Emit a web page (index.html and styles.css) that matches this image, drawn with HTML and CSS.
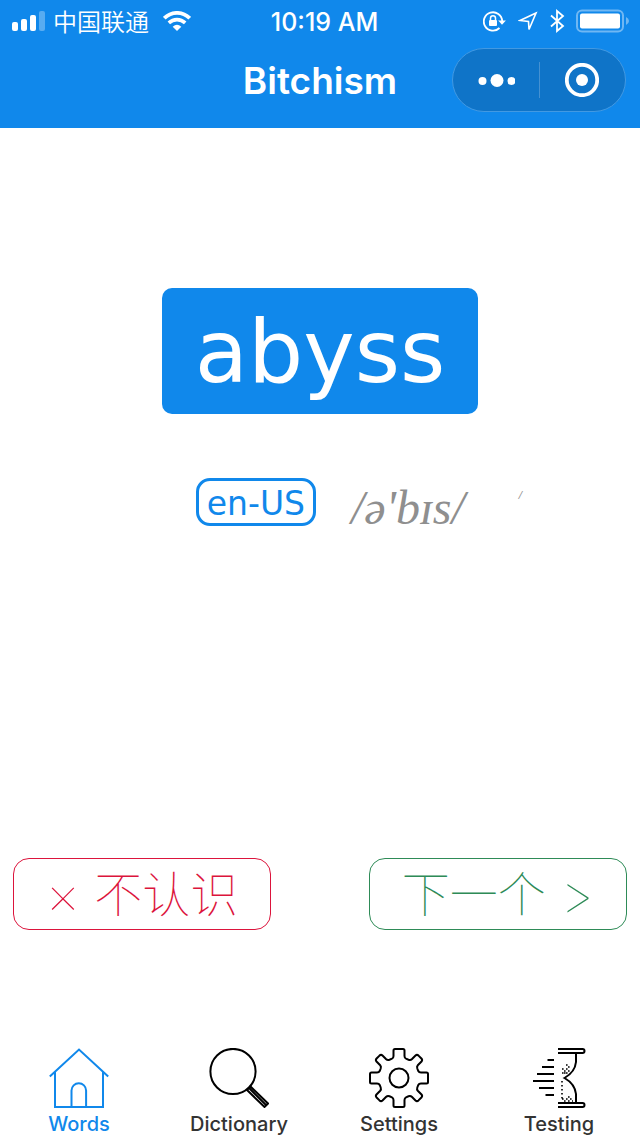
FILE: index.html
```html
<!DOCTYPE html>
<html lang="en">
<head>
<meta charset="utf-8">
<meta name="viewport" content="width=device-width, initial-scale=1">
<title>Bitchism</title>
<link rel="stylesheet" href="styles.css">
</head>
<body>
<header class="top">
  <div class="status">
    <div class="status-left">
      <svg width="34" height="20" viewBox="0 0 34 20" fill="#fff" aria-hidden="true"><rect y="11" width="6" height="9" rx="2"/><rect x="9" y="8" width="6" height="12" rx="2"/><rect x="18" y="4" width="6" height="16" rx="2"/><rect x="27" width="6" height="20" rx="2" opacity=".3"/></svg>
      <span class="carrier" lang="zh">中国联通</span>
      <svg class="wifi" width="28" height="20" viewBox="0 0 28 20" fill="none" stroke="#fff" aria-hidden="true"><path d="M1.3 7.2C8.5.1 19.5.1 26.7 7.2" stroke-width="3.8"/><path d="M5.8 11.9C10.500 7.500 17.500 7.500 22.200 11.900" stroke-width="3.600"/><path d="M14 20l-4.300-4.300q4.300-3.700 8.600 0z" fill="#fff" stroke="none"/></svg>
    </div>
    <time class="clock">10:19 AM</time>
    <div class="status-right">
      <svg width="24" height="22" viewBox="0 0 24 22" fill="none" stroke="#fff" stroke-width="1.800" aria-hidden="true"><path d="M16.500 18A9.200 9.200 0 1 1 19.200 11"/><path d="M15.200 10.500h7.700l-3.900 4.300z" fill="#fff" stroke="none"/><rect x="6" y="10" width="8" height="6" rx="1" fill="#fff" stroke="none"/><path d="M7.500 10V8.200a2.500 2.500 0 0 1 5 0V10" stroke-width="1.500"/></svg>
      <svg width="20" height="22" viewBox="0 0 20 22" fill="none" stroke="#fff" stroke-width="1.600" aria-hidden="true"><path d="M18 3L2 10.500l8.500 1 .5 8z"/></svg>
      <svg width="16" height="24" viewBox="0 0 16 24" fill="none" stroke="#fff" stroke-width="1.800" aria-hidden="true"><path d="M2 6.500l12 10.500-6 5V2l6 5L2 17.500"/></svg>
      <svg width="53" height="24" viewBox="0 0 53 24" aria-hidden="true"><rect x="1" y="1.500" width="46" height="21" rx="5" fill="none" stroke="#fff" stroke-opacity=".4" stroke-width="2"/><rect x="4" y="4.500" width="40" height="15" rx="2" fill="#fff"/><path d="M50 8q3 1.500 3 4t-3 4z" fill="#fff" opacity=".4"/></svg>
    </div>
  </div>
  <div class="titlebar">
    <h1 class="title">Bitchism</h1>
    <div class="capsule">
      <button class="capsule-button" type="button" aria-label="More"><svg width="38" height="16" viewBox="0 0 38 16" fill="#fff"><circle cx="5.500" cy="9" r="4"/><circle cx="20" cy="8.500" r="6.500"/><circle cx="34.500" cy="9" r="4"/></svg></button>
      <button class="capsule-button" type="button" aria-label="Close"><svg width="34" height="34" viewBox="0 0 34 34"><circle cx="17" cy="17" r="15.200" fill="none" stroke="#fff" stroke-width="3.800"/><circle cx="17" cy="17" r="6" fill="#fff"/></svg></button>
    </div>
  </div>
</header>
<main class="content">
  <p class="word">abyss</p>
  <div class="pronunciation">
    <button class="accent" type="button">en-US</button>
    <div class="phonetic">/ə'bɪs/</div>
    <span class="phonetic-mark">/</span>
  </div>
  <div class="actions" lang="zh">
    <button class="action unknown" type="button"><span class="sign">×</span><span>不认识</span></button>
    <button class="action next" type="button"><span>下一个</span><span class="sign">&gt;</span></button>
  </div>
</main>
<nav class="tabs">
  <a class="tab active" href="#words">
    <svg class="tab-icon" viewBox="0 0 60 60" fill="none" stroke="currentColor" stroke-width="2" aria-hidden="true"><path d="M.8 28.500L30 1.500l29.200 27M6 24v35h48V24M22.500 59V42.500a7.300 7.300 0 0 1 14.600 0V59"/></svg>
    Words</a>
  <a class="tab" href="#dictionary">
    <svg class="tab-icon" viewBox="0 0 60 60" fill="none" stroke="#000" stroke-width="2" aria-hidden="true"><circle cx="24" cy="23.500" r="22.600"/><path d="M38 42l3.500-3.500L59 55.500 55.500 59zM40 40l17 17"/></svg>
    Dictionary</a>
  <a class="tab" href="#settings">
    <svg class="tab-icon" viewBox="-30 -30 60 60" fill="none" stroke="#000" stroke-width="2" aria-hidden="true"><defs><path id="gear" d="M0-29H4Q5.500-29 5.500-27.500V-22Q5.500-20 7-19.300L9.500-18.300Q11.500-17.600 12.800-18.800L16.500-22.500Q18-23.800 19.500-22.400L22.400-19.500Q23.800-18 22.500-16.500L18.800-12.800Q17.600-11.500 18.300-9.500L19.300-7Q20-5.500 22-5.500H27.500Q29-5.500 29-4V0"/></defs><use href="#gear"/><use href="#gear" transform="rotate(90)"/><use href="#gear" transform="rotate(180)"/><use href="#gear" transform="rotate(270)"/><circle r="9.500"/></svg>
    Settings</a>
  <a class="tab" href="#testing">
    <svg class="tab-icon" viewBox="0 0 60 60" fill="none" stroke="#000" stroke-width="2" aria-hidden="true"><path d="M29 1h24.500a2 2 0 0 1 0 4H29M29 55h24.500a2 2 0 0 1 0 4H29M47 5v9q-1 10-11.500 16Q46 36 47 46v9M18.500 12H25M13 19h12M8 26h17M4 33h21M10 40h15M16.500 47H25"/><g stroke-width="1.600" stroke-dasharray="1.600 2.400"><path d="M33 33v20M33 25h6M35 23h6M33 21h2M37 21h3M35 23h2M39 19h2M35 25h2M37 17h2M35 53h9M37 51h7M39 49h4M33 51h3"/></g></svg>
    Testing</a>
</nav>
</body>
</html>
```
FILE: styles.css
```css
* { box-sizing: border-box; }

body {
  margin: 0;
  min-height: 100vh;
  display: flex;
  flex-direction: column;
  background: #fff;
  font-family: Inter, "Noto Sans CJK SC", sans-serif;
}

button {
  margin: 0;
  padding: 0;
  border: 0;
  background: none;
  color: inherit;
  font: inherit;
  cursor: pointer;
}

svg { display: block; flex: none; }

.top {
  background: #1088eb;
  color: #fff;
  padding-bottom: 14px;
}

.status,
.titlebar {
  display: grid;
  grid-template-columns: 1fr auto 1fr;
  align-items: center;
}

.status {
  height: 40px;
  padding: 0 11px 0 12px;
}

.status-left,
.status-right {
  display: flex;
  align-items: center;
}

.status-left { gap: 7px; }

.status-right {
  justify-content: flex-end;
  gap: 11px;
}

.carrier {
  font-family: "Noto Sans CJK SC", sans-serif;
  font-size: 24px;
  font-weight: 350;
  line-height: 40px;
}

.wifi { margin-left: 7px; }

.clock {
  font-size: 25px;
  font-weight: 500;
  line-height: 40px;
  padding-top: 2px;
  margin-left: 8px;
}

.titlebar {
  margin-top: 8px;
  padding-right: 14px;
  padding-left: 14px;
}

.title {
  grid-column: 2;
  margin: 0;
  font-size: 37px;
  font-weight: 600;
  line-height: 66px;
}

.capsule {
  align-self: start;
  justify-self: end;
  display: flex;
  align-items: center;
  width: 174px;
  height: 64px;
  border: 1px solid #4299e2;
  border-radius: 32px;
  background: #0f74c8;
}

.capsule-button {
  flex: 1;
  height: 36px;
  display: flex;
  align-items: center;
  justify-content: center;
}

.capsule-button + .capsule-button { border-left: 1px solid #4591d2; }

.content {
  flex: 1;
  display: flex;
  flex-direction: column;
  align-items: center;
  padding: 160px 13px 0;
}

.word {
  margin: 0;
  padding: 2px 33px 0;
  border-radius: 10px;
  background: #1088eb;
  color: #fff;
  font-family: "DejaVu Sans", sans-serif;
  font-size: 87px;
  line-height: 124px;
}

.pronunciation {
  display: flex;
  align-items: flex-start;
  margin-top: 64px;
  padding-left: 78px;
}

.accent {
  height: 48px;
  padding: 4px 8px 0;
  border: 3px solid #1088eb;
  border-radius: 14px;
  color: #1088eb;
  font-family: "DejaVu Sans", sans-serif;
  font-size: 33px;
  line-height: 38px;
}

.phonetic,
.phonetic-mark {
  color: #8f8f8f;
  font-family: "Liberation Serif", serif;
  font-style: italic;
  white-space: nowrap;
}

.phonetic {
  padding-top: 6px;
  margin-left: 35px;
  font-size: 48px;
  line-height: 48px;
}

.phonetic-mark {
  margin-left: 54px;
  padding-top: 11px;
  font-size: 12px;
  font-weight: 700;
  line-height: 12px;
}

.actions {
  align-self: stretch;
  display: flex;
  justify-content: space-between;
  margin: auto 0 88px;
}

.action {
  display: flex;
  align-items: flex-start;
  justify-content: center;
  gap: 14px;
  width: 258px;
  height: 72px;
  border: 1px solid;
  border-radius: 16px;
  font-family: "Noto Sans CJK SC", sans-serif;
  font-size: 48px;
  font-weight: 100;
  line-height: 64px;
}

.sign {
  font-family: Inter, sans-serif;
  font-size: 54px;
  line-height: 72px;
}

.unknown { color: #dc143c; }

.next { color: #2e8b57; }

.tabs {
  display: grid;
  grid-template-columns: repeat(4, 1fr);
  padding: 30px 1px 0 0;
  margin-left: -1px;
}

.tab {
  display: flex;
  flex-direction: column;
  align-items: center;
  gap: 4px;
  color: #333;
  font-size: 20px;
  font-weight: 500;
  line-height: 24px;
  text-decoration: none;
}

.tab.active { color: #1088eb; }

.tab-icon {
  width: 60px;
  height: 60px;
}
```
